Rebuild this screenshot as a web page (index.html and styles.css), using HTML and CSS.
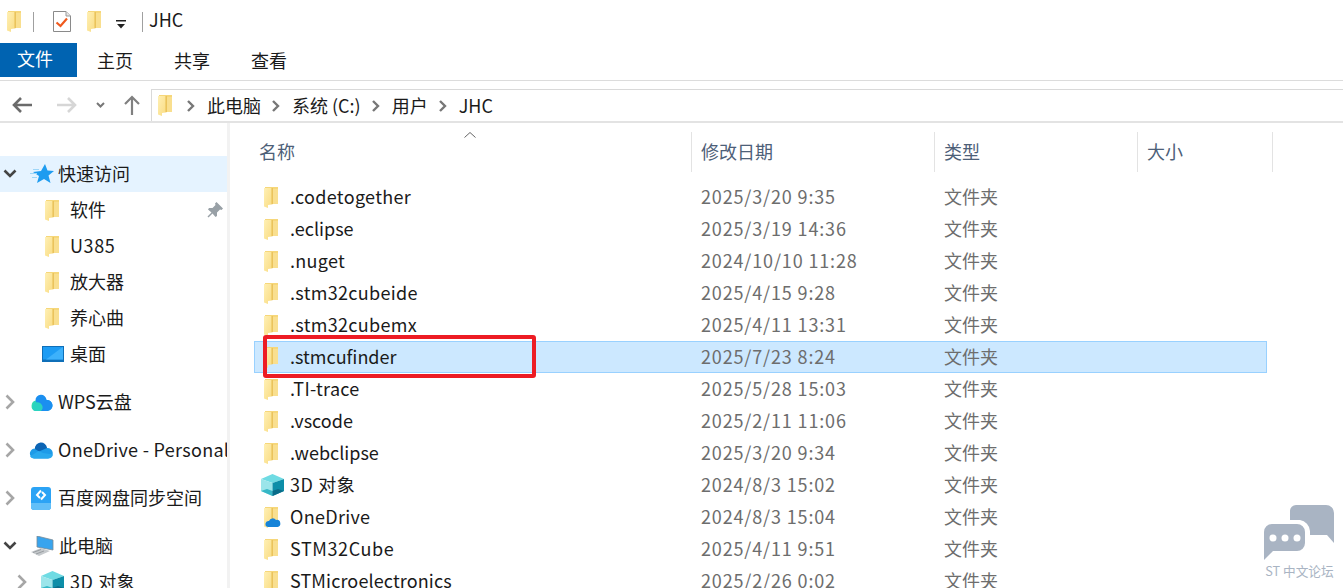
FILE: index.html
```html
<!DOCTYPE html>
<html lang="zh-CN">
<head>
<meta charset="utf-8">
<title>JHC</title>
<link rel="stylesheet" href="styles.css">
</head>
<body>
<svg class="defs" width="0" height="0" aria-hidden="true">
  <defs>
    <linearGradient id="fg" x1="0" y1="0" x2="1" y2="1"><stop offset="0" stop-color="#fff0b4"/><stop offset="1" stop-color="#f9dc84"/></linearGradient>
    <symbol id="folder" viewBox="0 0 14 21">
      <path d="M1 0H14V17H1Z" fill="#f6d77a"/>
      <path d="M8.500 2V17H14V2Z" fill="#f9df8f"/>
      <path d="M0 1 7.500 1V17.500L4 18V21L0 19.500Z" fill="url(#fg)"/>
      <path d="M7.500 1V17.500L9 17V1Z" fill="#eac35c"/>
    </symbol>
    <symbol id="cube" viewBox="0 0 23 22">
      <path d="M0 5 11.500 0 23 5 11.500 9Z" fill="#6fdbe3"/>
      <path d="M0 5 11.500 9V22L0 17Z" fill="#9be5ea"/>
      <path d="M11.500 9 23 5V17L11.500 22Z" fill="#0d8ea8"/>
      <path d="M0 17 6 15 11.500 17V22Z" fill="#36b7c6"/>
      <path d="M11.500 17 17 15 23 17 11.500 22Z" fill="#0a6c89"/>
    </symbol>
    <symbol id="cdown" viewBox="0 0 14 10"><path d="M1.500 1.500 7 7l5.500-5.500" fill="none" stroke="#444" stroke-width="2.600"/></symbol>
    <symbol id="cright" viewBox="0 0 10 16"><path d="M1.500 1.500 8 8l-6.500 6.500" fill="none" stroke="#a6a6a6" stroke-width="2.600"/></symbol>
    <symbol id="sep" viewBox="0 0 8 12"><path d="M1 1 6 6 1 11" fill="none" stroke="#777" stroke-width="2.400"/></symbol>
  </defs>
</svg>

<header class="titlebar">
  <svg class="ic-folder qa-first"><use href="#folder"/></svg>
  <span class="tb-sep"></span>
  <svg class="qa-doc" viewBox="0 0 18 21">
    <path d="M.5.500H13L17.500 5V20.500H.5Z" fill="#fff" stroke="#8a8a8a"/>
    <path d="M13 .5V5H17.500" fill="#e6e6e6" stroke="#9a9a9a"/>
    <path d="M3.500 11.500 7.500 15 14 7.500" fill="none" stroke="#f05a1e" stroke-width="2.200"/>
  </svg>
  <svg class="ic-folder qa-folder"><use href="#folder"/></svg>
  <svg class="qa-drop" viewBox="0 0 10 9"><path d="M0 0H10V1.500H0Z" fill="#222"/><path d="M1 4H9L5 8.500Z" fill="#222"/></svg>
  <span class="tb-sep sep-2"></span>
  <span class="title-text">JHC</span>
</header>

<nav class="tabs">
  <span class="tab tab-file">文件</span>
  <span class="tab tab-home">主页</span>
  <span class="tab tab-share">共享</span>
  <span class="tab tab-view">查看</span>
</nav>

<div class="addressbar">
  <svg class="nav-back" viewBox="0 0 20 16"><path d="M20 8H2M9 1 2 8l7 7" fill="none" stroke="#6b6b6b" stroke-width="2.600"/></svg>
  <svg class="nav-fwd" viewBox="0 0 20 16"><path d="M0 8H18M11 1l7 7-7 7" fill="none" stroke="#d6d6d6" stroke-width="2.600"/></svg>
  <svg class="nav-drop" viewBox="0 0 9 7"><path d="M1 1 4.500 4.500 8 1" fill="none" stroke="#777" stroke-width="2"/></svg>
  <svg class="nav-up" viewBox="0 0 16 20"><path d="M8 20V2M1 9l7-7 7 7" fill="none" stroke="#808080" stroke-width="2.200"/></svg>
  <div class="addr-box">
    <svg class="ic-folder addr-folder"><use href="#folder"/></svg>
    <svg class="crumb-sep sep-first"><use href="#sep"/></svg>
    <span class="crumb">此电脑</span>
    <svg class="crumb-sep"><use href="#sep"/></svg>
    <span class="crumb">系统 (C:)</span>
    <svg class="crumb-sep"><use href="#sep"/></svg>
    <span class="crumb">用户</span>
    <svg class="crumb-sep"><use href="#sep"/></svg>
    <span class="crumb">JHC</span>
  </div>
</div>

<main class="explorer">
  <aside class="sidebar">
    <div class="tree-row tree-active">
      <svg class="chev-down"><use href="#cdown"/></svg>
      <svg class="tree-ic star" viewBox="0 0 24 20">
        <path d="M15 0 17.500 6.500 24 7 18.500 11.500 20.500 19 14 15 7 19 9 12 3 8 11 7Z" fill="#1e9cf0"/>
        <path d="M3 5.500H9M0 9.500H7M2 13.500H7" stroke="#9ed6f8" stroke-width="1"/>
      </svg>
      <span class="tree-label">快速访问</span>
    </div>
    <div class="tree-row child"><svg class="ic-folder"><use href="#folder"/></svg><span class="tree-label">软件</span>
      <svg class="pin" viewBox="0 0 16 16"><path d="M9.500 0 16 6.500 14.500 8 13 7.500 10 10.500 10 14 8.500 15 5.500 11.500 1.500 15.500.5 14.500 4.500 10.500 1 7.500 2 6 5.500 6 8.500 3 8 1.500Z" fill="#98a0a6"/></svg>
    </div>
    <div class="tree-row child"><svg class="ic-folder"><use href="#folder"/></svg><span class="tree-label digits">U385</span></div>
    <div class="tree-row child"><svg class="ic-folder"><use href="#folder"/></svg><span class="tree-label">放大器</span></div>
    <div class="tree-row child"><svg class="ic-folder"><use href="#folder"/></svg><span class="tree-label">养心曲</span></div>
    <div class="tree-row child desk">
      <svg class="desktop" viewBox="0 0 22 16"><path d="M0 0H22V16H0Z" fill="#0f6fb8"/><path d="M1 1H21V13.500H1Z" fill="#1d9cf4"/><path d="M4 13.500 18 3 21 1V13.500Z" fill="#3db1fb"/></svg>
      <span class="tree-label">桌面</span>
    </div>

    <div class="tree-row group">
      <svg class="chev-right"><use href="#cright"/></svg>
      <svg class="tree-ic cloud" viewBox="0 0 24 17">
        <defs><linearGradient id="wps" x1="0" y1="0" x2="1" y2="0"><stop offset="0" stop-color="#35dfae"/><stop offset="1" stop-color="#1b9ff0"/></linearGradient></defs>
        <path d="M7 6.500A5.500 5.500 0 0 1 17.500 6 5.500 5.500 0 0 1 18.500 17H6A5.500 5.500 0 0 1 7 6.500Z" fill="url(#wps)"/>
        <path d="M12 17 6.500 6.500A5.500 5.500 0 0 1 17.500 6 5.500 5.500 0 0 1 18.500 17Z" fill="#1b8ff0"/>
        <path d="M7.500 8.500A5 5 0 0 1 12 17H6A4.500 4.500 0 0 1 7.500 8.500Z" fill="#2bd3c0"/>
      </svg>
      <span class="tree-label">WPS云盘</span>
    </div>
    <div class="tree-row group">
      <svg class="chev-right"><use href="#cright"/></svg>
      <svg class="tree-ic cloud" viewBox="0 0 24 16">
        <path d="M7 6A6 6 0 0 1 18 5.500 5 5 0 0 1 19 16H5A5 5 0 0 1 7 6Z" fill="#1e9be8"/>
        <path d="M6 6.500A6 6 0 0 1 18 5.500L10 9Z" fill="#0c64b4"/>
        <path d="M1 14 9.500 8.500 14 10.500 24 12A5 5 0 0 1 19 16H5A5 5 0 0 1 1 14Z" fill="#2aa9ee"/>
      </svg>
      <span class="tree-label wide">OneDrive - Personal</span>
    </div>
    <div class="tree-row group">
      <svg class="chev-right"><use href="#cright"/></svg>
      <svg class="tree-ic baidu" viewBox="0 0 20 23">
        <rect width="20" height="23" rx="3" fill="#2ba3f5"/>
        <path d="M0 16H20V20A3 3 0 0 1 17 23H3A3 3 0 0 1 0 20Z" fill="#62bff8"/>
        <path d="M10 3.500 6 8l3 3M10 12.500 14 8l-3-3" fill="none" stroke="#fff" stroke-width="2"/>
      </svg>
      <span class="tree-label">百度网盘同步空间</span>
    </div>
    <div class="tree-row group">
      <svg class="chev-down"><use href="#cdown"/></svg>
      <svg class="tree-ic pc" viewBox="0 0 24 20">
        <path d="M7 0 23 4V14L7 11Z" fill="#38a4ee" stroke="#7a8a96" stroke-width=".8"/>
        <path d="M1 16 11 12 20 15 9 20Z" fill="#c5c9cc"/>
        <path d="M3 16.500 11 13.500M6 18 14 15" stroke="#8c9094" stroke-width=".8"/>
      </svg>
      <span class="tree-label">此电脑</span>
    </div>
    <div class="tree-row sub-row">
      <svg class="chev-right"><use href="#cright"/></svg>
      <svg class="cube-nav"><use href="#cube"/></svg>
      <span class="tree-label digits">3D 对象</span>
    </div>
  </aside>

  <section class="files">
    <div class="sort-caret-wrap">
      <svg class="sort-caret" viewBox="0 0 12 6"><path d="M.5 5.500 6 .5l5.500 5" fill="none" stroke="#666"/></svg>
    </div>
    <div class="file-head">
      <span class="col-h h-name">名称</span>
      <span class="col-h h-date">修改日期</span>
      <span class="col-h h-type">类型</span>
      <span class="col-h h-size">大小</span>
    </div>
    <div class="file-list">
      <div class="file-row"><span class="f-name wide"><svg class="ic-folder"><use href="#folder"/></svg>.codetogether</span><span class="f-date">2025/3/20 9:35</span><span class="f-type">文件夹</span></div>
      <div class="file-row"><span class="f-name"><svg class="ic-folder"><use href="#folder"/></svg>.eclipse</span><span class="f-date">2025/3/19 14:36</span><span class="f-type">文件夹</span></div>
      <div class="file-row"><span class="f-name wide"><svg class="ic-folder"><use href="#folder"/></svg>.nuget</span><span class="f-date">2024/10/10 11:28</span><span class="f-type">文件夹</span></div>
      <div class="file-row"><span class="f-name wide"><svg class="ic-folder"><use href="#folder"/></svg>.stm32cubeide</span><span class="f-date">2025/4/15 9:28</span><span class="f-type">文件夹</span></div>
      <div class="file-row"><span class="f-name wide"><svg class="ic-folder"><use href="#folder"/></svg>.stm32cubemx</span><span class="f-date">2025/4/11 13:31</span><span class="f-type">文件夹</span></div>
      <div class="file-row selected"><span class="f-name"><svg class="ic-folder"><use href="#folder"/></svg>.stmcufinder</span><span class="f-date">2025/7/23 8:24</span><span class="f-type">文件夹</span><span class="red-box"></span></div>
      <div class="file-row"><span class="f-name wide"><svg class="ic-folder"><use href="#folder"/></svg>.TI-trace</span><span class="f-date">2025/5/28 15:03</span><span class="f-type">文件夹</span></div>
      <div class="file-row"><span class="f-name"><svg class="ic-folder"><use href="#folder"/></svg>.vscode</span><span class="f-date">2025/2/11 11:06</span><span class="f-type">文件夹</span></div>
      <div class="file-row"><span class="f-name"><svg class="ic-folder"><use href="#folder"/></svg>.webclipse</span><span class="f-date">2025/3/20 9:34</span><span class="f-type">文件夹</span></div>
      <div class="file-row"><span class="f-name digits"><svg class="cube-file"><use href="#cube"/></svg>3D 对象</span><span class="f-date">2024/8/3 15:02</span><span class="f-type">文件夹</span></div>
      <div class="file-row"><span class="f-name wide"><span class="od-folder"><svg class="ic-folder"><use href="#folder"/></svg><svg class="od-cloud" viewBox="0 0 16 10"><path d="M4 4A4 4 0 0 1 11 3 3.500 3.500 0 0 1 12.500 10H3A3 3 0 0 1 4 4Z" fill="#1683d8"/></svg></span>OneDrive</span><span class="f-date">2024/8/3 15:04</span><span class="f-type">文件夹</span></div>
      <div class="file-row"><span class="f-name digits"><svg class="ic-folder"><use href="#folder"/></svg>STM32Cube</span><span class="f-date">2025/4/11 9:51</span><span class="f-type">文件夹</span></div>
      <div class="file-row"><span class="f-name wide-s"><svg class="ic-folder"><use href="#folder"/></svg>STMicroelectronics</span><span class="f-date">2025/2/26 0:02</span><span class="f-type">文件夹</span></div>
    </div>
  </section>
</main>

<div class="watermark">
  <svg class="wm-icon" viewBox="0 0 71 56">
    <path d="M32 0H62A8 8 0 0 1 70 8V38L63 30H46V26A12 12 0 0 0 36 15H26V6A6 6 0 0 1 32 0Z" fill="#a9b4c3"/>
    <path d="M8 19H33A8 8 0 0 1 41 27V38A8 8 0 0 1 33 46H9L0 55V27A8 8 0 0 1 8 19Z" fill="#a9b4c3"/>
    <circle cx="9" cy="33" r="3.500" fill="#fff"/><circle cx="21" cy="33" r="3.500" fill="#fff"/><circle cx="33" cy="33" r="3.500" fill="#fff"/>
  </svg>
  <span class="wm-text">ST 中文论坛</span>
</div>
</body>
</html>
```

FILE: styles.css
```css
* { box-sizing: border-box; }
html, body { margin: 0; height: 100%; overflow: hidden; background: #fff; }
body {
  width: 1343px; height: 588px; position: relative;
  font-family: "Noto Sans CJK SC", "Open Sans", sans-serif;
  font-size: 18px; color: #1a1a1a; line-height: 24px;
}
.defs { position: absolute; }
.ic-folder { width: 14px; height: 21px; flex: none; display: block; }
.wide { letter-spacing: .3px; }
.wide-s { letter-spacing: .12px; }
.digits { letter-spacing: .6px; }

.titlebar { height: 43px; display: flex; align-items: center; padding-left: 7px; }
.tb-sep { width: 1px; height: 20px; background: #a0a0a0; margin-left: 12px; }
.qa-doc { width: 18px; height: 21px; margin-left: 19px; }
.qa-folder { margin-left: 16px; }
.qa-drop { width: 10px; height: 9px; margin-left: 15px; margin-top: 5px; }
.sep-2 { margin-left: 16px; }
.title-text { margin-left: 6px; padding-bottom: 5px; }

.tabs { height: 38px; display: flex; align-items: flex-start; border-bottom: 1px solid #dcdcdc; }
.tab { height: 34px; line-height: 34px; }
.tab-file { width: 77px; background: #0063b1; color: #fff; padding-left: 17px; padding-bottom: 4px; line-height: 30px; }
.tab-home { margin-left: 20px; }
.tab-share { margin-left: 41px; }
.tab-view { margin-left: 41px; }

.addressbar { height: 42px; display: flex; align-items: center; padding-top: 8px; border-bottom: 2px solid #e3e3e3; }
.nav-back { width: 20px; height: 16px; margin-left: 12px; flex: none; }
.nav-fwd { width: 20px; height: 16px; margin-left: 25px; flex: none; }
.nav-drop { width: 9px; height: 7px; margin-left: 19px; flex: none; }
.nav-up { width: 16px; height: 20px; margin-left: 19px; flex: none; }
.addr-box { flex: 1; height: 32px; margin-left: 11px; display: flex; align-items: center; border: 1px solid #d9d9d9; border-bottom: 0; border-right: 0; padding-left: 6px; }
.addr-folder { width: 14px; height: 21px; }
.crumb { padding-bottom: 2px; }
.crumb-sep { width: 8px; height: 12px; margin: 0 12px 0 11px; flex: none; }
.sep-first { margin-left: 15px; margin-right: 12px; }

.explorer { display: flex; height: 465px; overflow: hidden; }
.sidebar { width: 230px; flex: none; padding-top: 33px; border-right: 3px solid #f2f2f2; overflow: hidden; white-space: nowrap; }
.tree-row { width: 227px; height: 36px; display: flex; align-items: center; overflow: hidden; position: relative; }
.tree-label { padding-bottom: 2px; }
.tree-active { background: #e5f3ff; }
.chev-down { width: 14px; height: 10px; margin-left: 3px; flex: none; }
.chev-right { width: 10px; height: 16px; margin-left: 5px; flex: none; }
.tree-ic { flex: none; }
.star { width: 24px; height: 20px; margin-left: 13px; margin-right: 4px; }
.tree-row.child { padding-left: 45px; }
.tree-row.child .ic-folder { margin-right: 11px; }
.pin { width: 16px; height: 16px; position: absolute; left: 207px; top: 10px; }
.tree-row.desk { padding-left: 42px; }
.desktop { width: 22px; height: 16px; margin-right: 6px; flex: none; }
.group { margin-top: 12px; }
.group:has(.chev-down) .pc { margin-left: 13px; }
.cloud { width: 24px; height: 17px; margin-left: 14px; margin-right: 5px; }
.baidu { width: 20px; height: 23px; margin-left: 16px; margin-right: 7px; }
.pc { width: 24px; height: 20px; margin-right: 5px; }
.sub-row { margin-top: 0; padding-left: 12px; }
.cube-nav { width: 23px; height: 22px; margin-left: 14px; margin-right: 6px; flex: none; }

.files { flex: 1; position: relative; padding-left: 24px; }
.sort-caret-wrap { position: absolute; left: 234px; top: 9px; }
.sort-caret { width: 12px; height: 6px; display: block; }
.file-head { display: grid; grid-template-columns: 438px 243px 203px 135px; height: 40px; margin-top: 9px; }
.col-h { display: flex; align-items: center; color: #4d6078; padding-left: 9px; padding-bottom: 2px; border-right: 1px solid #e3e3e3; }
.h-name { padding-left: 5px; }
.file-list { margin-top: 9px; }
.file-row { display: grid; grid-template-columns: 437px 243px 203px; width: 1013px; height: 32px; align-items: center; position: relative; border: 1px solid transparent; }
.file-row.selected { background: #cce8ff; border-color: #99d1ff; }
.f-name { display: flex; align-items: center; padding-left: 9px; padding-bottom: 2px; white-space: nowrap; }
.f-name .ic-folder { margin-right: 12px; }
.f-name > .ic-folder, .f-name > .od-folder, .f-name > .cube-file { margin-top: 2px; }
.f-date { color: #6d6d6d; padding-left: 9px; padding-bottom: 2px; white-space: nowrap; letter-spacing: .85px; }
.f-type { color: #6d6d6d; padding-left: 9px; padding-bottom: 2px; }
.cube-file { width: 23px; height: 22px; margin-left: -3px; margin-right: 6px; flex: none; }
.od-folder { position: relative; display: block; flex: none; width: 14px; height: 21px; margin-right: 12px; }
.od-cloud { position: absolute; left: 1px; top: 10px; width: 16px; height: 10px; }
.red-box { position: absolute; left: 8px; top: -7px; width: 273px; height: 43px; border: 4px solid #ed1c24; border-radius: 3px; }

.watermark { position: absolute; left: 1264px; top: 505px; width: 71px; display: flex; flex-direction: column; align-items: center; }
.wm-icon { width: 71px; height: 56px; flex: none; display: block; }
.wm-text { font-size: 12.7px; line-height: 16px; color: #a9b4c3; white-space: nowrap; margin-top: 2px; }
```
